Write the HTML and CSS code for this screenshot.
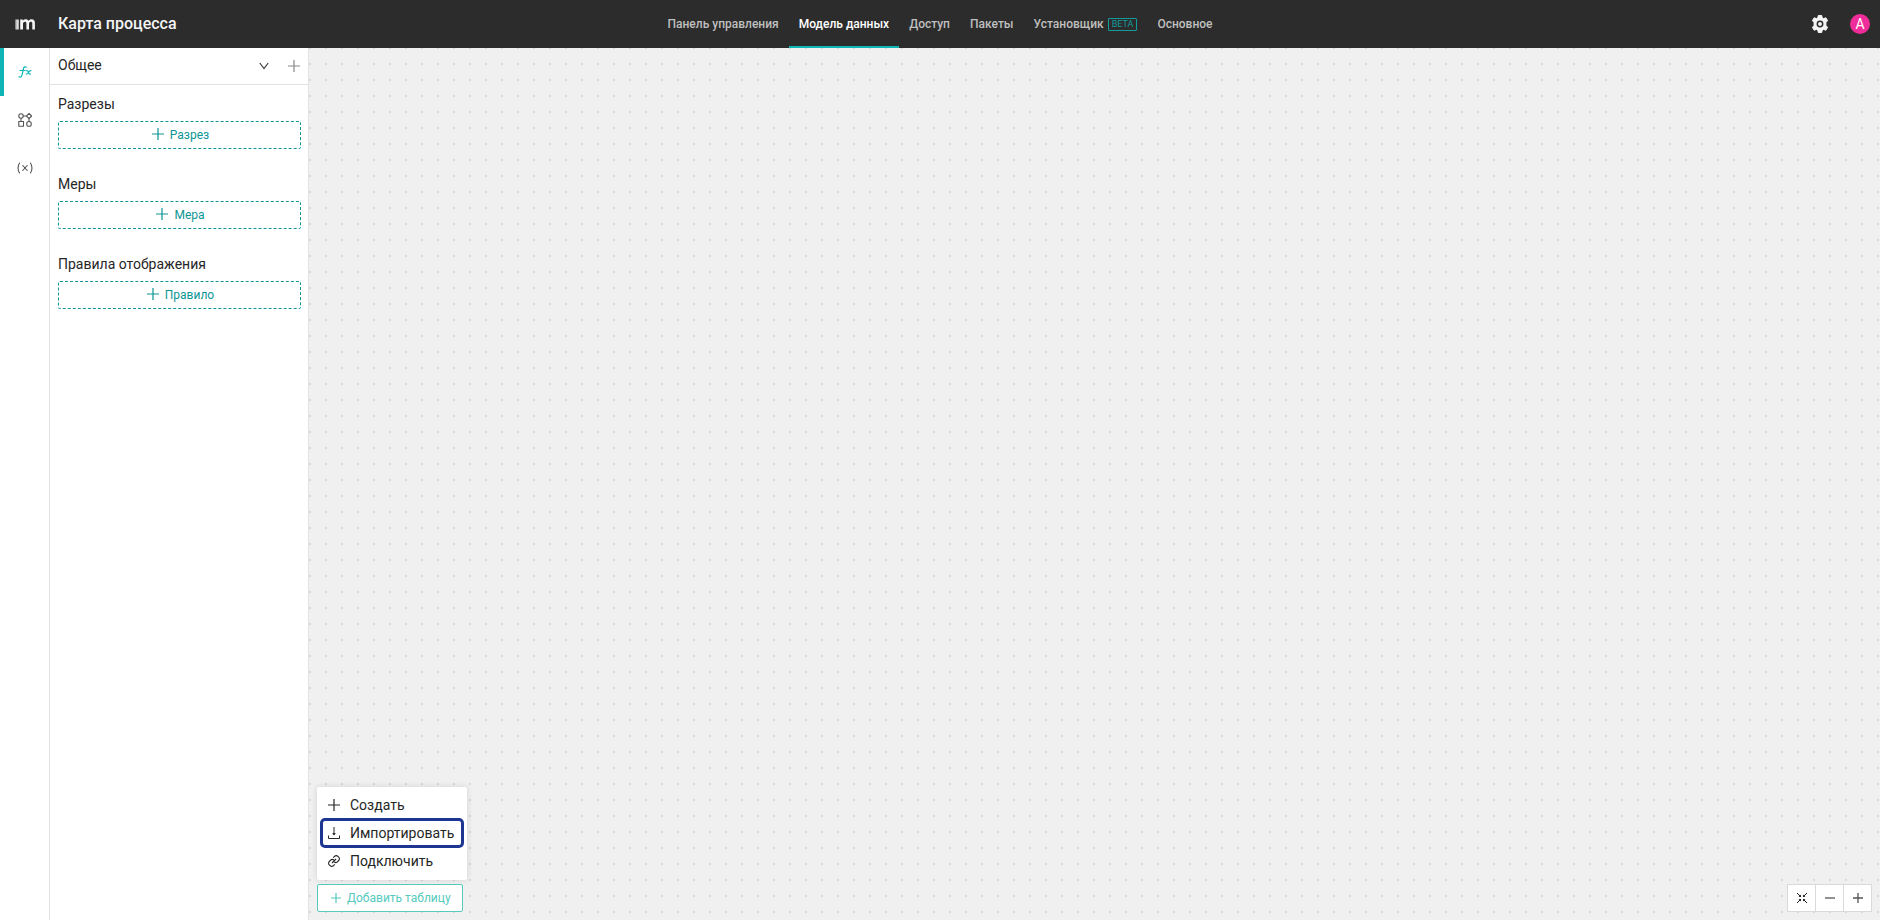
FILE: index.html
```
<!doctype html>
<html lang="ru">
<head>
    <meta charset="UTF-8">
    <meta name="viewport" content="width=device-width, initial-scale=1.0">
    <title>Карта процесса</title>
    <link rel="stylesheet" href="styles.css">
</head>
<body>
    <header class="header">
        <div class="header-left">
            <a class="logo" href="#" aria-label="На главную">
                <svg width="20" height="11" viewBox="0 0 20 11">
                    <path d="M0 .500h1.500v10H0z" fill="#8a8a8a"/>
                    <path d="M1.200.500h2.600v10H1.200z" fill="#dcdcdc"/>
                    <path d="M5.200 10.500V.5h2.600v1.200C8.500.7 9.500.2 10.700.2c1.300 0 2.300.6 2.800 1.600.7-1 1.800-1.600 3.200-1.600 2 0 3.200 1.300 3.200 3.500v6.800h-2.600V4.500c0-1.100-.5-1.700-1.500-1.700s-1.800.8-1.800 2v5.700h-2.600V4.500c0-1.100-.5-1.700-1.500-1.700s-1.900.8-1.900 2v5.700z" fill="#f5f5f5"/>
                </svg>
            </a>
            <h1 class="title">Карта процесса</h1>
        </div>
        <nav class="nav">
            <a href="#">Панель управления</a>
            <a href="#" class="active">Модель данных</a>
            <a href="#">Доступ</a>
            <a href="#">Пакеты</a>
            <a href="#">Установщик<span class="beta">BETA</span></a>
            <a href="#">Основное</a>
        </nav>
        <div class="header-right">
            <button class="settings" aria-label="Настройки">
                <svg width="18" height="18" viewBox="0 0 18 18">
                    <path d="M7.300.5h3.400l.5 2.300 1.400.8 2.300-.8 1.700 3-1.700 1.600v3.200l1.700 1.600-1.700 3-2.300-.8-1.400.8-.5 2.300H7.300l-.5-2.300-1.400-.8-2.300.8-1.700-3 1.700-1.600V7.400L1.400 5.800l1.700-3 2.300.8 1.400-.8z" fill="#f5f5f5" stroke="#f5f5f5" stroke-linejoin="round"/>
                    <circle cx="9" cy="9" r="2.700" fill="#f5f5f5" stroke="#2c2c2c" stroke-width="1.500"/>
                </svg>
            </button>
            <button class="avatar">A</button>
        </div>
    </header>

    <div class="page">
        <aside class="rail">
            <button class="rail-item active" aria-label="Показатели">
                <svg width="14" height="12" viewBox="0 0 14 12" fill="none" stroke="currentColor" stroke-width="1.200" stroke-linecap="round">
                    <path d="M8.300 1.200C7.200.4 5.900.8 5.500 2.500L4 9.200C3.600 11 2.300 11.500 1 10.700M2 4.500h5.200"/>
                    <path d="M8.500 4.700c1.200-.4 1.500.2 1.900 1.500.4 1.500.8 2.300 2 1.800M12.900 4.700c-1.200-.2-1.700.7-2.500 1.800-.7 1-1.300 1.700-2.200 1.500"/>
                </svg>
            </button>
            <button class="rail-item" aria-label="Схема">
                <svg width="14" height="14" viewBox="0 0 14 14" fill="none" stroke="currentColor" stroke-width="1.100">
                    <circle cx="3" cy="3" r="2.200"/>
                    <path d="M11 .4L13.600 3 11 5.600 8.400 3zM5.200 3h3.200M3 5.200v3.300M11 5.600v2.900"/>
                    <path d="M.8 8.500h4.700v4.700H.8z"/>
                    <ellipse cx="11" cy="10.900" rx="2.300" ry="2.400"/>
                </svg>
            </button>
            <button class="rail-item" aria-label="Переменные">
                <svg width="16" height="12" viewBox="0 0 16 12" fill="none" stroke="currentColor" stroke-width="1.100" stroke-linecap="round">
                    <path d="M2.600 1C.5 3.800.5 8.200 2.600 11M13.400 1c2.100 2.800 2.100 7.200 0 10M5.800 3.500l4.400 5M10.200 3.500l-4.400 5"/>
                </svg>
            </button>
        </aside>

        <section class="panel">
            <div class="panel-head">
                <span class="panel-name">Общее</span>
                <button class="icon-btn" aria-label="Развернуть">
                    <svg width="10" height="8" viewBox="0 0 10 8" fill="none" stroke="#333" stroke-width="1.100">
                        <path d="M.8 1L5 6.500 9.200 1"/>
                    </svg>
                </button>
                <button class="icon-btn muted" aria-label="Добавить">
                    <svg class="plus" width="12" height="12" viewBox="0 0 12 12"><path d="M6 0v12M0 6h12"/></svg>
                </button>
            </div>
            <div class="group">
                <h2>Разрезы</h2>
                <button class="add"><svg class="plus" width="12" height="14" viewBox="0 0 12 14"><path d="M6 0v12M0 6h12"/></svg>Разрез</button>
            </div>
            <div class="group">
                <h2>Меры</h2>
                <button class="add"><svg class="plus" width="12" height="14" viewBox="0 0 12 14"><path d="M6 0v12M0 6h12"/></svg>Мера</button>
            </div>
            <div class="group">
                <h2>Правила отображения</h2>
                <button class="add"><svg class="plus" width="12" height="14" viewBox="0 0 12 14"><path d="M6 0v12M0 6h12"/></svg>Правило</button>
            </div>
        </section>

        <main class="canvas">
            <div class="table-add">
                <div class="menu">
                    <button class="menu-item">
                        <svg width="12" height="12" viewBox="0 0 12 12" fill="none" stroke="currentColor" stroke-width="1.200"><path d="M6 0v12M0 6h12"/></svg>
                        Создать
                    </button>
                    <button class="menu-item selected">
                        <svg width="12" height="12" viewBox="0 0 12 12" fill="none" stroke="currentColor"><path d="M.5 8.500v3h11v-3M6 0v8"/><path d="M4.200 6h3.600L6 8.500z" fill="currentColor" stroke="none"/></svg>
                        Импортировать
                    </button>
                    <button class="menu-item">
                        <svg width="12" height="12" viewBox="0 0 12 12" fill="none" stroke="currentColor" stroke-width="1.100"><path d="M5.200 2.600l1.300-1.300a2.400 2.400 0 0 1 3.400 0l.8.800a2.400 2.400 0 0 1 0 3.400L9.400 6.800a2.400 2.400 0 0 1-3.200.2M6.800 9.400l-1.300 1.300a2.400 2.400 0 0 1-3.400 0l-.8-.8a2.400 2.400 0 0 1 0-3.400l1.300-1.300a2.400 2.400 0 0 1 3.200-.2M4 8l4-4"/></svg>
                        Подключить
                    </button>
                </div>
                <button class="table-btn"><svg class="plus" width="10" height="10" viewBox="0 0 10 10"><path d="M5 0v10M0 5h10"/></svg>Добавить таблицу</button>
            </div>
            <div class="zoom">
                <button aria-label="По размеру">
                    <svg width="10" height="10" viewBox="0 0 10 10" fill="none" stroke="#222">
                        <path d="M0 0l3.500 3.500M10 0L6.500 3.500M0 10l3.500-3.500M10 10L6.500 6.500"/>
                        <path d="M4 1.500V4H1.500zM6 1.500V4h2.500zM4 8.500V6H1.500zM6 8.500V6h2.500z" fill="#222" stroke="none"/>
                    </svg>
                </button>
                <button aria-label="Уменьшить">
                    <svg width="10" height="10" viewBox="0 0 10 10" stroke="#555" stroke-width="1.300"><path d="M0 5h10"/></svg>
                </button>
                <button aria-label="Увеличить">
                    <svg width="10" height="10" viewBox="0 0 10 10" stroke="#555" stroke-width="1.300"><path d="M5 0v10M0 5h10"/></svg>
                </button>
            </div>
        </main>
    </div>
</body>
</html>
```
FILE: styles.css
```
* {margin: 0; padding: 0; box-sizing: border-box;}
body {
    display: flex;
    flex-direction: column;
    min-height: 100vh;
    font-family: Roboto, "Liberation Sans", sans-serif;
    font-size: 14px;
    color: #262626;
    background: #fff;
}
button {
    font: inherit;
    color: inherit;
    background: none;
    border: none;
    cursor: pointer;
}
a {color: inherit; text-decoration: none;}
svg {flex: none; display: block;}
.plus {fill: none; stroke: currentColor; stroke-width: 1.2;}

/* header */
.header {
    display: grid;
    grid-template-columns: 1fr auto 1fr;
    height: 48px;
    background: #2c2c2c;
    color: #f5f5f5;
}
.header-left {display: flex; align-items: center;}
.logo {width: 58px; padding-left: 15px;}
.title {padding-bottom: 2px; font-size: 16px; font-weight: 500;}
.nav {display: flex;}
.nav a {
    display: flex;
    align-items: center;
    padding: 2px 10px 0;
    border-bottom: 2px solid transparent;
    font-size: 12px;
    font-weight: 500;
    color: #bfbfbf;
}
.nav .active {color: #fff; border-color: #0fb5b5;}
.beta {
    margin-left: 4px;
    padding: 0 3px;
    border: 1px solid #139a9a;
    border-radius: 1px;
    font-size: 9px;
    line-height: 11px;
    font-weight: 400;
    color: #139a9a;
}
.header-right {
    display: flex;
    justify-content: flex-end;
    align-items: center;
    gap: 21px;
    padding-right: 10px;
}
.avatar {
    width: 20px;
    height: 20px;
    border-radius: 50%;
    background: #ee2d9a;
    color: #fff;
}

.page {flex: 1; display: flex;}

/* left rail */
.rail {
    width: 50px;
    border-right: 1px solid #e2e2e2;
}
.rail-item {
    display: flex;
    justify-content: center;
    align-items: center;
    width: 100%;
    height: 48px;
    border-left: 4px solid transparent;
    padding-right: 4px;
    color: #555;
}
.rail-item.active {color: #0fb5b5; border-color: #0fb5b5;}

/* panel */
.panel {
    width: 259px;
    border-right: 1px solid #e2e2e2;
}
.panel-head {
    display: flex;
    align-items: center;
    gap: 19px;
    height: 37px;
    padding: 0 8px;
    border-bottom: 1px solid #e2e2e2;
}
.panel-name {flex: 1; padding-bottom: 2px;}
.muted {color: #888;}
.group {padding: 1px 7px 24px 8px;}
.panel-head + .group {padding-top: 9px;}
.group h2 {
    margin-bottom: 7px;
    font-size: 14px;
    line-height: 20px;
    font-weight: 400;
}
.add {
    display: flex;
    justify-content: center;
    align-items: center;
    gap: 6px;
    width: 100%;
    height: 28px;
    padding-left: 2px;
    border: 1px dashed #0d9595;
    border-radius: 2px;
    font-size: 12px;
    color: #0d9595;
}

/* canvas */
.canvas {
    flex: 1;
    display: flex;
    justify-content: space-between;
    align-items: flex-end;
    padding: 8px;
    background: #f0f0f0 conic-gradient(from 270deg at 2px 2px, #d9d9d9 90deg, transparent 0) 0 -1px / 16px 16px;
}
.table-add {
    display: flex;
    flex-direction: column;
    align-items: flex-start;
    gap: 4px;
}
.menu {
    padding: 4px 3px 5px;
    background: #fff;
    border-radius: 2px;
    box-shadow: 0 0 6px rgba(0, 0, 0, .12);
}
.menu-item {
    display: flex;
    align-items: center;
    gap: 10px;
    width: 100%;
    height: 28px;
    padding: 0 10px 0 8px;
}
.menu-item.selected {
    height: 30px;
    margin: -1px 0;
    border: 3px solid #1d3694;
    border-radius: 5px;
    padding: 0 7px 0 5px;
}
.table-btn {
    display: flex;
    align-items: center;
    gap: 6px;
    height: 28px;
    padding: 0 11px 0 13px;
    border: 1px solid #56cabe;
    border-radius: 2px;
    background: #fff;
    font-size: 12px;
    color: #56cabe;
}
.zoom {
    display: flex;
    gap: 1px;
    padding: 1px;
    background: #d9d9d9;
}
.zoom button {
    display: flex;
    justify-content: center;
    align-items: center;
    width: 27px;
    height: 26px;
    background: #fff;
}
```
